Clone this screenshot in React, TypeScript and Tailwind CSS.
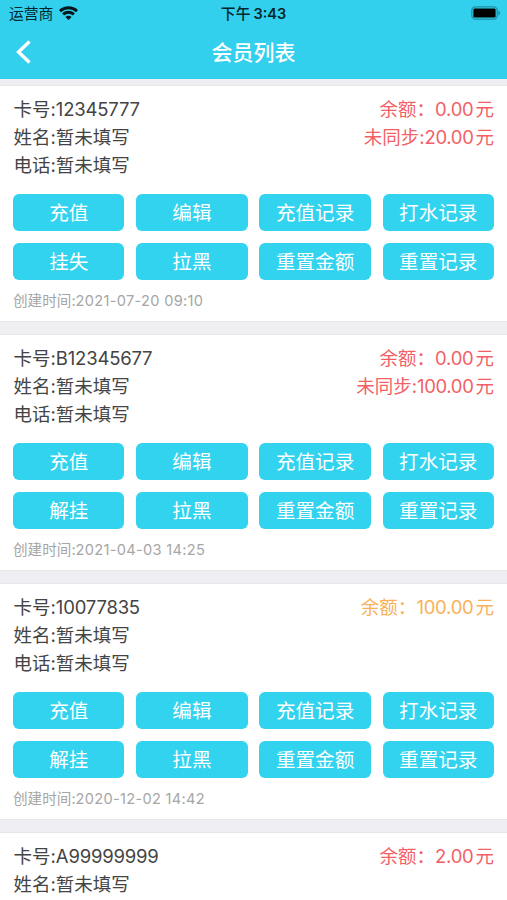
type Member = {
  card: string;
  balance: string;
  unsynced?: string;
  lossAction?: string;
  created?: string;
  amber?: boolean;
};

const members: Member[] = [
  { card: '12345777', balance: '0.00', unsynced: '20.00', lossAction: '挂失', created: '2021-07-20 09:10' },
  { card: 'B12345677', balance: '0.00', unsynced: '100.00', lossAction: '解挂', created: '2021-04-03 14:25' },
  { card: '10077835', balance: '100.00', lossAction: '解挂', created: '2020-12-02 14:42', amber: true },
  { card: 'A99999999', balance: '2.00' },
];

function StatusBar() {
  return (
    <div className="grid h-[27px] grid-cols-3 items-center pl-[9px] pr-[6px] text-[14.8px] text-[#06262c]">
      <div className="flex items-center gap-[6px] pt-[1px]">
        <span>运营商</span>
        <svg className="-mt-[3px]" width="19" height="14" viewBox="0 0 19 14" fill="none" stroke="#05191d" strokeWidth="2.9">
          <path d="M1 5.1C5.7.7 13.3.7 18 5.1" />
          <path d="M4.1 8.4c3-2.8 7.8-2.8 10.8 0" />
          <path d="M9.5 14 6.4 10.9c1.7-1.5 4.5-1.5 6.2 0z" fill="#05191d" stroke="none" />
        </svg>
      </div>
      <div className="-ml-[3px] whitespace-nowrap pt-[2px] text-center font-medium">
        下午<span className="ml-[3px] text-[14.5px] font-semibold">3:43</span>
      </div>
      <svg className="-mt-[1px] justify-self-end" width="30" height="14" viewBox="0 0 30 14">
        <rect x="0.8" y="0.8" width="25.4" height="12.4" rx="3.6" fill="none" stroke="#1f8fa2" strokeWidth="1.3" />
        <rect x="2.4" y="2.4" width="22.2" height="9.2" rx="1.4" fill="#000" />
        <path d="M27.4 4.6c2.4.8 2.4 4 0 4.8z" fill="#1f8fa2" />
      </svg>
    </div>
  );
}

function Actions({ lossAction }: { lossAction: string }) {
  const actions = ['充值', '编辑', '充值记录', '打水记录', lossAction, '拉黑', '重置金额', '重置记录'];
  return (
    <div className="mt-[15px] grid grid-cols-4 gap-x-[11.7px] gap-y-3">
      {actions.map((a) => (
        <button key={a} className="flex h-[37px] items-center justify-center whitespace-nowrap rounded-[6px] bg-[#32d3ee] pt-[2px] text-[19.6px] text-white">
          {a}
        </button>
      ))}
    </div>
  );
}

function Card({ m }: { m: Member }) {
  return (
    <section className="h-[235px] shrink-0 bg-white px-[13px] pt-[9px] shadow-[0_0_0_1px_#e7e7ea]">
      <div className="flex justify-between whitespace-nowrap text-[18.5px] leading-[28px] text-[#444444]">
        <div className="pl-[0.5px]">
          <p>卡号:<span className="tracking-[-0.2px]">{m.card}</span></p>
          <p>姓名:暂未填写</p>
          {m.lossAction && <p>电话:暂未填写</p>}
        </div>
        <div className={m.amber ? 'text-right text-[#f9b159]' : 'text-right text-[#f25f66]'}>
          <p>余额：<span className="mr-[2px] tracking-[-0.25px]">{m.balance}</span>元</p>
          {m.unsynced && <p>未同步:<span className="mr-[2px] tracking-[-0.35px]">{m.unsynced}</span>元</p>}
        </div>
      </div>
      {m.lossAction && <Actions lossAction={m.lossAction} />}
      {m.created && (
        <p className="mt-[11px] text-[14.6px] leading-[20px] text-[#a6a6a6]">
          创建时间:<span className="tracking-[0.3px]">{m.created}</span>
        </p>
      )}
    </section>
  );
}

export default function App() {
  return (
    <main className="h-[900px] w-[507px] overflow-hidden bg-[#efeff3] font-['Inter','Noto_Sans_CJK_SC',sans-serif]">
      <header className="h-[79px] bg-[#32d0ec]">
        <StatusBar />
        <div className="grid h-[52px] grid-cols-3 items-center">
          <svg className="-mt-[2px] ml-[15px]" width="17" height="24" viewBox="0 0 17 24" fill="none" stroke="white" strokeWidth="3.4">
            <path d="M14.5 1.5 3.5 12l11 10.5" />
          </svg>
          <h1 className="whitespace-nowrap text-center text-[21px] font-medium text-white">会员列表</h1>
        </div>
      </header>
      <div className="mt-[7px] flex flex-col gap-[14px]">
        {members.map((m) => (
          <Card key={m.card} m={m} />
        ))}
      </div>
    </main>
  );
}
